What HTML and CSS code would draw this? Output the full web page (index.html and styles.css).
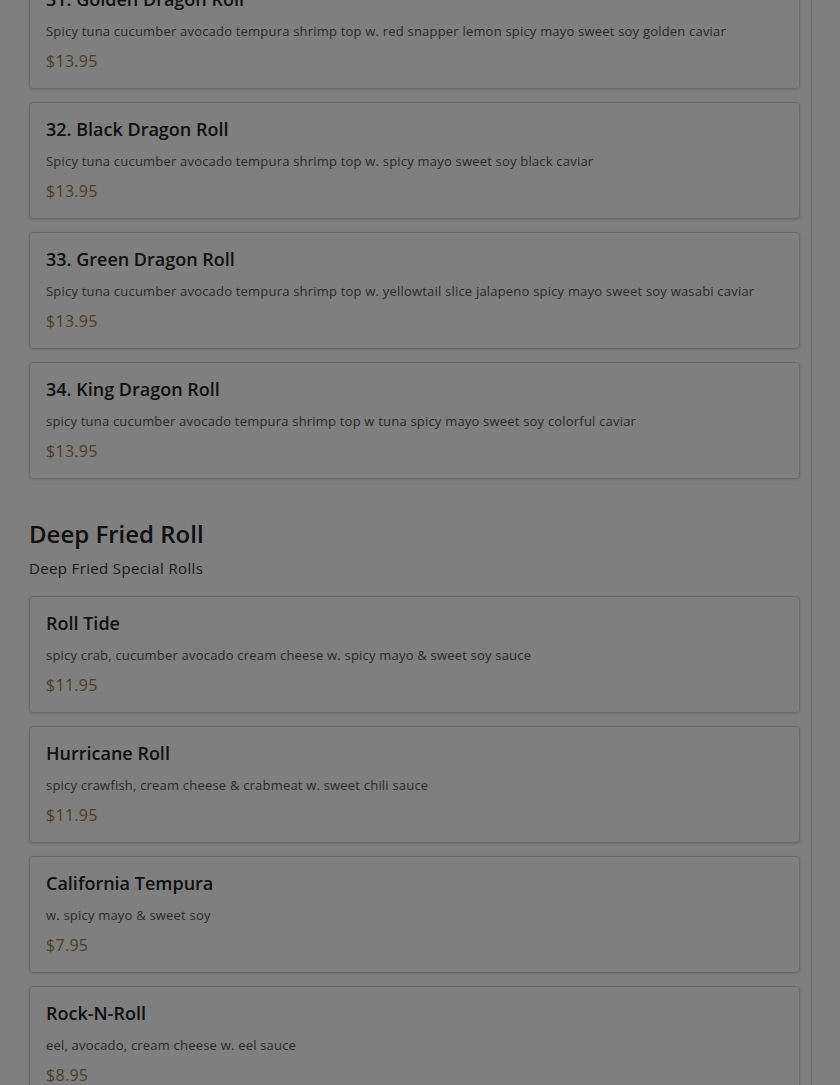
FILE: index.html
```html
<!DOCTYPE html>
<html>
<head>
<meta charset="utf-8">
<link rel="stylesheet" href="styles.css">
</head>
<body>
<div class="page">
  <div class="list scrolled">
    <div class="card"><div class="name">31. Golden Dragon Roll</div><div class="desc">Spicy tuna cucumber avocado tempura shrimp top w. red snapper lemon spicy mayo sweet soy golden caviar</div><div class="price">$13.95</div></div>
    <div class="card"><div class="name">32. Black Dragon Roll</div><div class="desc">Spicy tuna cucumber avocado tempura shrimp top w. spicy mayo sweet soy black caviar</div><div class="price">$13.95</div></div>
    <div class="card"><div class="name">33. Green Dragon Roll</div><div class="desc">Spicy tuna cucumber avocado tempura shrimp top w. yellowtail slice jalapeno spicy mayo sweet soy wasabi caviar</div><div class="price">$13.95</div></div>
    <div class="card"><div class="name">34. King Dragon Roll</div><div class="desc">spicy tuna cucumber avocado tempura shrimp top w tuna spicy mayo sweet soy colorful caviar</div><div class="price">$13.95</div></div>
  </div>
  <div class="section">
    <h2 class="sec-title">Deep Fried Roll</h2>
    <div class="sec-sub">Deep Fried Special Rolls</div>
  </div>
  <div class="list">
    <div class="card"><div class="name">Roll Tide</div><div class="desc">spicy crab, cucumber avocado cream cheese w. spicy mayo &amp; sweet soy sauce</div><div class="price">$11.95</div></div>
    <div class="card"><div class="name">Hurricane Roll</div><div class="desc">spicy crawfish, cream cheese &amp; crabmeat w. sweet chili sauce</div><div class="price">$11.95</div></div>
    <div class="card"><div class="name">California Tempura</div><div class="desc">w. spicy mayo &amp; sweet soy</div><div class="price">$7.95</div></div>
    <div class="card"><div class="name">Rock-N-Roll</div><div class="desc">eel, avocado, cream cheese w. eel sauce</div><div class="price">$8.95</div></div>
  </div>
</div>
<div class="overlay"></div>
</body>
</html>
```

FILE: styles.css
```css
html, body {
  margin: 0;
  padding: 0;
  background: #fff;
  font-family: "Open Sans", "Lato", sans-serif;
  overflow: hidden;
}
.page {
  width: 771px;
  padding: 0 11px 0 29px;
  border-right: 1px solid #d6d6d6;
  min-height: 1085px;
}
.list {
  display: flex;
  flex-direction: column;
  gap: 13px;
}
.scrolled {
  margin-top: -28px;
}
.card {
  box-sizing: border-box;
  border: 1px solid #d4d4d4;
  border-radius: 4px;
  box-shadow: 0 1px 3px rgba(0,0,0,0.15);
  padding: 14px 16px 0;
  height: 117px;
  display: flex;
  flex-direction: column;
}
.name {
  font-size: 18px;
  font-weight: 600;
  color: #222;
  line-height: 24px;
}
.desc {
  font-size: 13px;
  letter-spacing: 0.2px;
  color: #555;
  line-height: 18px;
  margin-top: 11px;
}
.price {
  font-size: 16px;
  letter-spacing: 0.3px;
  color: #97814f;
  line-height: 22px;
  margin-top: 10px;
}
.section {
  padding: 40px 0 18px;
}
.sec-title {
  margin: 0;
  font-size: 24px;
  font-weight: 600;
  color: #222;
  line-height: 30px;
}
.sec-sub {
  font-size: 15px;
  letter-spacing: 0.35px;
  color: #333;
  line-height: 20px;
  margin-top: 9px;
}
.overlay {
  position: fixed;
  inset: 0;
  background: rgba(0,0,0,0.5);
}
```
